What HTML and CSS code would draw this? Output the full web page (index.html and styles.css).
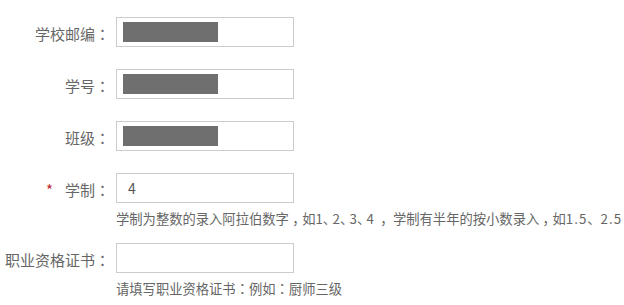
FILE: index.html
```html
<!DOCTYPE html>
<html lang="zh-CN">
<head>
<meta charset="utf-8">
<title>表单</title>
<link rel="stylesheet" href="styles.css">
</head>
<body>
<div class="form">
  <div class="row">
    <label class="lbl">学校邮编<span class="c" lang="zh-Hant">：</span></label>
    <div class="field"><div class="input masked"><span class="mask"></span></div></div>
  </div>
  <div class="row">
    <label class="lbl">学号<span class="c" lang="zh-Hant">：</span></label>
    <div class="field"><div class="input masked"><span class="mask"></span></div></div>
  </div>
  <div class="row">
    <label class="lbl">班级<span class="c" lang="zh-Hant">：</span></label>
    <div class="field"><div class="input masked"><span class="mask"></span></div></div>
  </div>
  <div class="row with-hint">
    <label class="lbl"><span class="req">*</span>学制<span class="c" lang="zh-Hant">：</span></label>
    <div class="field">
      <div class="input">4</div>
      <p class="hint">学制为整数的录入阿拉伯数字<span class="cm">，</span>如1<span class="d">、</span>2<span class="d">、</span>3<span class="d">、</span>4<span class="cm wide">，</span>学制有半年的按小数录入<span class="cm">，</span>如<span class="n">1.5</span>、<span class="n">2.5</span></p>
    </div>
  </div>
  <div class="row with-hint">
    <label class="lbl">职业资格证书<span class="c" lang="zh-Hant">：</span></label>
    <div class="field">
      <div class="input"></div>
      <p class="hint">请填写职业资格证书<span class="c" lang="zh-Hant">：</span>例如<span class="c" lang="zh-Hant">：</span>厨师三级</p>
    </div>
  </div>
</div>
</body>
</html>
```
FILE: styles.css
```css
html, body {
  margin: 0;
  padding: 0;
  background: #fff;
  overflow: hidden;
}
body {
  font-family: "Noto Sans CJK SC", "Noto Sans", sans-serif;
  color: #666;
}
.c {
  font-family: "Noto Sans CJK TC", "Noto Sans CJK SC", sans-serif;
}
.cm {
  display: inline-block;
  width: 1em;
  text-align: center;
  font-feature-settings: "halt";
}
.cm.wide {
  width: 19px;
}
.d {
  font-feature-settings: "halt";
  margin-right: 3px;
}
.n {
  letter-spacing: 1px;
}
.form {
  padding-top: 17px;
}
.row {
  display: flex;
  align-items: flex-start;
  margin-bottom: 22px;
}
.row.with-hint {
  margin-bottom: 15px;
}
.lbl {
  width: 110px;
  height: 30px;
  flex: none;
  text-align: right;
  font-size: 15px;
  line-height: 26px;
  padding-top: 4px;
  box-sizing: border-box;
  color: #666;
  white-space: nowrap;
}
.req {
  color: #c0282d;
  font-size: 15px;
  margin-right: 12px;
}
.field {
  margin-left: 6px;
  display: flex;
  flex-direction: column;
}
.input {
  width: 178px;
  height: 30px;
  box-sizing: border-box;
  border: 1px solid #ccc;
  padding: 0 11px;
  font-size: 14px;
  line-height: 28px;
  color: #555;
  display: flex;
  align-items: center;
}
.input.masked {
  padding: 0 6px;
}
.mask {
  display: block;
  width: 95px;
  height: 20px;
  background: #6f6f6f;
}
.hint {
  margin: 7px 0 0;
  font-size: 13.3px;
  line-height: 18px;
  color: #666;
  white-space: nowrap;
}
```
